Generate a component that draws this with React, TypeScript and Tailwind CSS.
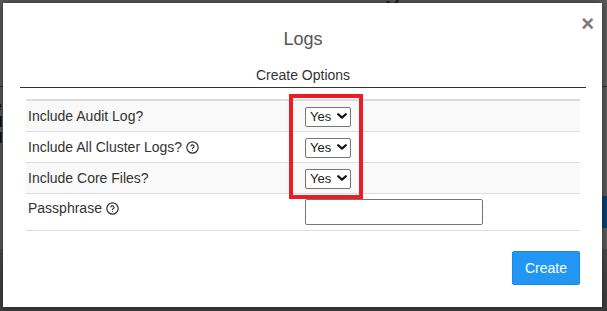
import React from "react";

function HelpIcon() {
  return (
    <svg
      width="13"
      height="13"
      viewBox="0 0 24 24"
      fill="none"
      stroke="#333"
      strokeWidth="2.2"
      strokeLinecap="round"
      strokeLinejoin="round"
      className="inline-block ml-[4px] align-[-2px]"
    >
      <circle cx="12" cy="12" r="10.5" />
      <path d="M9.1 9a3 3 0 0 1 5.8 1c0 2-3 2.5-3 4" />
      <path d="M12 17.5h.01" />
    </svg>
  );
}

function YesSelect() {
  return (
    <div className="relative w-[46px] h-[20px]">
      <select
        defaultValue="yes"
        className="appearance-none w-[46px] h-[20px] border border-[#767676] rounded-[2px] bg-white pl-[4px] text-[13px] leading-[18px] text-[#222] outline-none"
      >
        <option value="yes">Yes</option>
        <option value="no">No</option>
      </select>
      <svg
        width="10"
        height="6"
        viewBox="0 0 10 6"
        className="absolute right-[4px] top-[7px] pointer-events-none"
      >
        <path d="M1.2 1.2 L5 4.6 L8.8 1.2" fill="none" stroke="#111" strokeWidth="2.2" strokeLinecap="round" strokeLinejoin="round" />
      </svg>
    </div>
  );
}

const rows = [
  { label: "Include Audit Log?", help: false, striped: true },
  { label: "Include All Cluster Logs?", help: true, striped: false },
  { label: "Include Core Files?", help: false, striped: true },
];

export default function App() {
  return (
    <div
      className="relative w-[607px] h-[311px] overflow-hidden bg-[#5a5a5a]"
      style={{ fontFamily: '"Liberation Sans", Arial, sans-serif' }}
    >
      {/* page behind the dimmed overlay */}
      <div className="flex flex-col h-full">
        <div className="h-[87px] border-b border-[#2e2e2e] flex justify-center">
          <h2 className="-mt-[26px] text-[30px] leading-[30px] text-[#1e1e1e]">Account Settings</h2>
        </div>
        <div className="flex justify-between h-[162px]">
          <div className="pl-0 pt-[11px] text-[14px] leading-[16px] text-[#111] font-bold -ml-[10px]">
            <div>le</div>
            <div>ld</div>
            <div>ld</div>
            <div>)</div>
          </div>
          <div className="mt-[109px] w-[20px] h-[32px] bg-[#0d3f6b]" />
        </div>
        <div className="flex-1 bg-gradient-to-b from-[#4a4a4a] to-[#3c3c3c]" />
      </div>

      {/* modal */}
      <div className="absolute left-[3px] top-[3px] w-[599px] h-[304px] bg-white shadow-[0_0_6px_rgba(0,0,0,0.5)]">
        <button className="absolute right-[8px] top-[10px] text-[22px] leading-[22px] font-bold text-[#7a7a7a]">
          ×
        </button>
        <div className="pt-[26px] pl-[17px] pr-[16px]">
          <h3 className="text-center text-[18px] leading-[20px] text-[#555]">Logs</h3>
          <h4 className="mt-[16px] pb-[2px] text-center text-[14px] leading-[20px] text-[#333] border-b border-[#333]">
            Create Options
          </h4>

          <div className="relative mt-[11px] mx-[6px] border-t-2 border-[#ddd] text-[14px] leading-[20px] text-[#333]">
            {rows.map((r) => (
              <div
                key={r.label}
                className={`grid grid-cols-[277px_1fr] border-b border-[#ddd] ${r.striped ? "bg-[#f9f9f9]" : "bg-white"}`}
              >
                <div className="py-[5px] pl-[2px]">
                  {r.label}
                  {r.help && <HelpIcon />}
                </div>
                <div className="py-[5px] pl-[2px]">
                  <YesSelect />
                </div>
              </div>
            ))}
            <div className="grid grid-cols-[277px_1fr] border-b border-[#ddd]">
              <div className="pt-[4px] pb-[5px] pl-[2px]">
                Passphrase
                <HelpIcon />
              </div>
              <div className="py-[5px] pl-[2px]">
                <input
                  type="password"
                  className="block w-[178px] h-[26px] border border-[#767676] rounded-[2px] px-[4px] outline-none"
                />
              </div>
            </div>

            {/* red annotation box */}
            <div className="absolute left-[263px] -top-[7px] w-[74px] h-[105px] border-[4px] border-[#ed1c24] pointer-events-none" />
          </div>

          <div className="flex justify-end mx-[6px] mt-[20px]">
            <button className="w-[68px] h-[34px] rounded-[2px] bg-[#2196f3] border border-[#1e88e5] text-white text-[14px]">
              Create
            </button>
          </div>
        </div>
      </div>
    </div>
  );
}
